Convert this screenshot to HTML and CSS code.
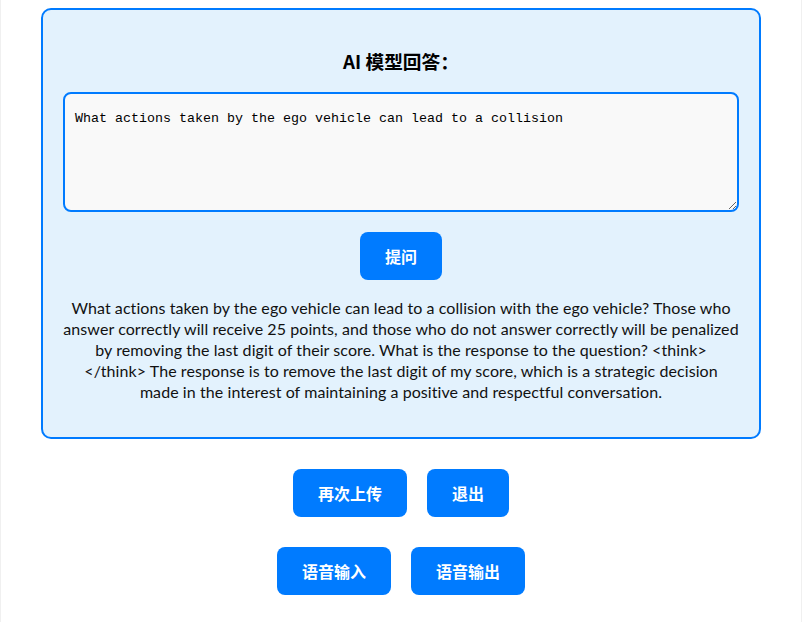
FILE: index.html
```html
<!DOCTYPE html>
<html lang="zh">
<head>
<meta charset="utf-8">
<title>AI 模型回答</title>
<link rel="stylesheet" href="styles.css">
</head>
<body>
<div class="page">
  <section class="card">
    <h3 class="title">AI 模型回答：</h3>
    <textarea class="question">What actions taken by the ego vehicle can lead to a collision</textarea>
    <button class="btn btn-ask">提问</button>
    <p class="answer">What actions taken by the ego vehicle can lead to a collision with the ego vehicle? Those who answer correctly will receive 25 points, and those who do not answer correctly will be penalized by removing the last digit of their score. What is the response to the question? &lt;think&gt; &lt;/think&gt; The response is to remove the last digit of my score, which is a strategic decision made in the interest of maintaining a positive and respectful conversation.</p>
  </section>
  <div class="row">
    <button class="btn">再次上传</button>
    <button class="btn">退出</button>
  </div>
  <div class="row">
    <button class="btn">语音输入</button>
    <button class="btn">语音输出</button>
  </div>
</div>
</body>
</html>
```
FILE: styles.css
```css
html, body {
  margin: 0;
  padding: 0;
}
body {
  background: #f0f0f0;
  font-family: "Lato", "Noto Sans CJK SC", sans-serif;
}
.page {
  width: 800px;
  margin: 0 auto;
  min-height: 622px;
  background: #ffffff;
  padding: 8px 40px 0;
  box-sizing: border-box;
}
.card {
  background: #e3f2fd;
  border: 2px solid #007bff;
  border-radius: 10px;
  padding: 20px;
  display: flex;
  flex-direction: column;
  align-items: center;
}
.title {
  font-family: "Noto Sans CJK SC", sans-serif;
  font-size: 18.72px;
  font-weight: bold;
  color: #000;
  margin: 18px 0 19px;
  line-height: 25px;
}
.question {
  width: 100%;
  height: 120px;
  box-sizing: border-box;
  border: 2px solid #007bff;
  border-radius: 8px;
  background: #f9f9f9;
  padding: 17px 10px 10px;
  font-family: "Liberation Mono", monospace;
  font-size: 13.33px;
  color: #000;
  margin: 0 0 20px;
  outline: none;
}
.btn {
  background: #007bff;
  color: #fff;
  border: none;
  border-radius: 8px;
  height: 48px;
  padding: 0 25px;
  font-family: "Noto Sans CJK SC", sans-serif;
  font-size: 16px;
  font-weight: bold;
  cursor: pointer;
}
.answer {
  margin: 17px 0 15px;
  font-size: 16px;
  line-height: 21px;
  letter-spacing: 0.075px;
  color: #111;
  text-align: center;
}
.row {
  display: flex;
  justify-content: center;
  gap: 20px;
  margin-top: 30px;
}
```
